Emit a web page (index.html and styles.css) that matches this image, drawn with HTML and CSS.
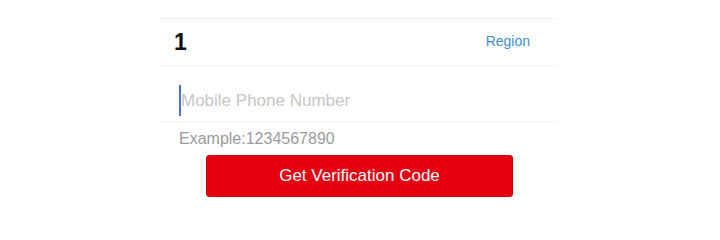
FILE: index.html
```html
<!DOCTYPE html>
<html>
<head>
<meta charset="utf-8">
<link rel="stylesheet" href="styles.css">
</head>
<body>
<div class="form">
  <div class="row-top"></div>
  <div class="row-country">
    <span class="code">1</span>
    <span class="region">Region</span>
  </div>
  <div class="row-phone">
    <span class="cursor"></span>
    <span class="placeholder">Mobile Phone Number</span>
  </div>
  <div class="example">Example:1234567890</div>
  <div class="btn-wrap">
    <button class="btn">Get Verification Code</button>
  </div>
</div>
</body>
</html>
```
FILE: styles.css
```css
html, body {
  margin: 0;
  padding: 0;
  background: #ffffff;
  font-family: "Liberation Sans", Arial, sans-serif;
}
.form {
  margin-left: 160px;
  width: 398px;
  display: flex;
  flex-direction: column;
}
.row-top {
  height: 18px;
  border-bottom: 1px solid #f2f2f2;
}
.row-country {
  height: 46px;
  border-bottom: 1px solid #f2f2f2;
  display: flex;
  align-items: center;
  justify-content: space-between;
  padding: 0 28px 0 14px;
}
.code {
  font-size: 23px;
  font-weight: bold;
  color: #111;
  margin-top: 1px;
}
.region {
  font-size: 14px;
  color: #3b8ec6;
  margin-top: -3px;
}
.row-phone {
  height: 41px;
  padding-top: 14px;
  border-bottom: 1px solid #f2f2f2;
  display: flex;
  align-items: center;
  padding-left: 19px;
}
.cursor {
  width: 2px;
  height: 31px;
  background: #4c6fd6;
}
.placeholder {
  font-size: 17px;
  color: #c6c6c6;
  margin-top: 1px;
}
.example {
  font-size: 16px;
  color: #9a9a9a;
  padding-left: 19px;
  margin-top: 7px;
  line-height: 20px;
}
.btn-wrap {
  display: flex;
  padding-left: 46px;
  margin-top: 6px;
}
.btn {
  width: 307px;
  height: 42px;
  background: #e4000f;
  border: 1px solid #cf0010;
  border-radius: 3px;
  color: #ffffff;
  font-family: "Liberation Sans", Arial, sans-serif;
  font-size: 17px;
  padding: 0;
}
```
